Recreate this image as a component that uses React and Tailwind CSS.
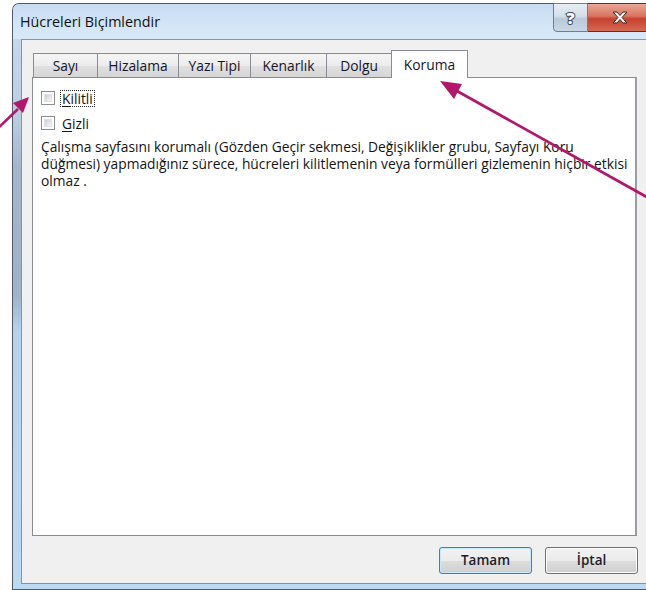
import React from "react";

const tabs = [
  { label: "Sayı", w: "w-[65px]", cls: "border-l border-r" },
  { label: "Hizalama", w: "w-[81px]", cls: "border-r" },
  { label: "Yazı Tipi", w: "w-[72px]", cls: "border-r" },
  { label: "Kenarlık", w: "w-[76px]", cls: "border-r" },
  { label: "Dolgu", w: "w-[64px]", cls: "" },
];

const lines = [
  "Çalışma sayfasını korumalı (Gözden Geçir sekmesi, Değişiklikler grubu, Sayfayı Koru",
  "düğmesi) yapmadığınız sürece, hücreleri kilitlemenin veya formülleri gizlemenin hiçbir etkisi",
  "olmaz .",
];

function CheckBox() {
  return (
    <div className="w-[14px] h-[14px] border border-[#8e8f8f] bg-white p-[2px] shrink-0">
      <div className="w-full h-full bg-gradient-to-br from-[#cbcfd4] to-[#f7f7f7] border border-[#dde0e4]" />
    </div>
  );
}

function Button({ children, primary }) {
  return (
    <div
      className={
        "w-[93px] h-[27px] rounded-[3px] flex items-center justify-center text-[13.5px] font-semibold text-[#1c1c2a] bg-[linear-gradient(#f2f2f2_0%,#ebebeb_50%,#dddddd_51%,#cfcfcf_100%)] " +
        (primary
          ? "border border-[#3c7fb1] shadow-[inset_0_0_0_1px_#c6e8fb]"
          : "border border-[#707070] shadow-[inset_0_0_0_1px_#fbfbfb]")
      }
    >
      {children}
    </div>
  );
}

export default function App() {
  return (
    <div className="relative w-[646px] h-[590px] overflow-hidden bg-white font-['Open_Sans','Noto_Sans',sans-serif] text-[#141414]">
      {/* window */}
      <div className="ml-[12px] mt-[3px] w-[660px] h-[587px] rounded-tl-[7px] border-l border-t border-b border-[#4f5a66] flex flex-col bg-[linear-gradient(180deg,#c8ddf2_0%,#b9cde1_20%,#a3b7cb_28%,#9db3c9_50%,#b6d3ee_56%,#bcd9f3_100%)]">
        {/* title bar */}
        <div className="relative h-[35px] shrink-0 rounded-tl-[6px] bg-[linear-gradient(180deg,#c7dcf2_0%,#d3e5f7_60%,#d8e8f8_100%)] flex items-center pl-[7px]">
          <span className="text-[14.3px] leading-none text-[#111] mt-[1px]">Hücreleri Biçimlendir</span>
          {/* caption buttons */}
          <div className="absolute left-[540px] top-[-1px] flex">
            <div className="w-[35px] h-[29px] rounded-bl-[4px] border border-[#6f7f91] bg-[linear-gradient(180deg,#e7eef5_0%,#d3dee9_45%,#b9c9da_55%,#c9d7e5_100%)] flex items-center justify-center">
              <span className="text-[16px] font-extrabold text-white leading-none [-webkit-text-stroke:2px_#3a4858] [paint-order:stroke_fill]">?</span>
            </div>
            <div className="w-[64px] h-[29px] border border-l-0 border-[#6e2a22] bg-[linear-gradient(180deg,#e9a897_0%,#d9745f_45%,#c7402f_55%,#d56a52_100%)] flex items-center justify-center">
              <svg width="18" height="13" viewBox="0 0 18 13">
                <path
                  d="M2 1 H6 L9 4.5 L12 1 H16 L11 6.5 L16 12 H12 L9 8.5 L6 12 H2 L7 6.5 Z"
                  fill="#ffffff"
                  stroke="#4b2320"
                  strokeWidth="1"
                  strokeLinejoin="round"
                />
              </svg>
            </div>
          </div>
        </div>

        {/* frame + client area */}
        <div className="flex-1 pl-[8px] pb-[5px] flex flex-col">
          <div className="flex-1 border-l border-t border-b border-[#8595a7] bg-[#f0f0f0] pt-[10px] pl-[10px] flex flex-col">
            {/* tab strip */}
            <div className="flex items-end h-[27px] pl-[1px]">
              {tabs.map((t) => (
                <div
                  key={t.label}
                  className={
                    "h-[24px] border-t border-[#898c95] bg-[linear-gradient(180deg,#f5f5f5_0%,#ececec_50%,#e0e0e0_51%,#d6d6d6_100%)] flex items-center justify-center pt-[1px] text-[13.8px] text-[#15152a] " +
                    t.w +
                    " " +
                    t.cls
                  }
                >
                  {t.label}
                </div>
              ))}
              <div className="relative z-10 w-[77px] h-[28px] mb-[-1px] border-l border-r border-t border-[#898c95] bg-white flex items-start justify-center pt-[4px] text-[13.8px] text-[#15152a]">
                Koruma
              </div>
            </div>

            {/* tab page */}
            <div className="w-[605px] h-[459px] border border-r-2 border-[#898c95] border-r-[#9c9ea4] bg-white pt-[11px] pl-[8px] text-[13.8px] text-[#141414]">
              <div className="flex items-center h-[18px]">
                <CheckBox />
                <span className="ml-[5px] px-[1px] border border-dotted border-[#2a2a2a] leading-[15px]">
                  <span className="underline underline-offset-2">K</span>ilitli
                </span>
              </div>
              <div className="flex items-center h-[18px] mt-[7px]">
                <CheckBox />
                <span className="ml-[5px] px-[1px] border border-transparent leading-[15px]">
                  <span className="underline underline-offset-2">G</span>izli
                </span>
              </div>
              <div className="mt-[6px] flex flex-col">
                {lines.map((l) => (
                  <div key={l} className="h-[17px] leading-[17px] whitespace-nowrap">
                    {l}
                  </div>
                ))}
              </div>
            </div>

            {/* dialog buttons */}
            <div className="w-[606px] flex justify-end gap-[13px] mt-[11px]">
              <Button primary>Tamam</Button>
              <Button>İptal</Button>
            </div>
          </div>
        </div>
      </div>

      {/* callout arrows */}
      <svg className="absolute inset-0 pointer-events-none" width="646" height="590" viewBox="0 0 646 590">
        <line x1="-4" y1="130" x2="18" y2="109" stroke="#b3176c" strokeWidth="2.6" />
        <polygon points="29,97 23,113 13,103" fill="#b3176c" />
        <line x1="652" y1="200" x2="457" y2="91" stroke="#b3176c" strokeWidth="2.8" />
        <polygon points="440,81 462,84 454,99" fill="#b3176c" />
      </svg>
    </div>
  );
}
